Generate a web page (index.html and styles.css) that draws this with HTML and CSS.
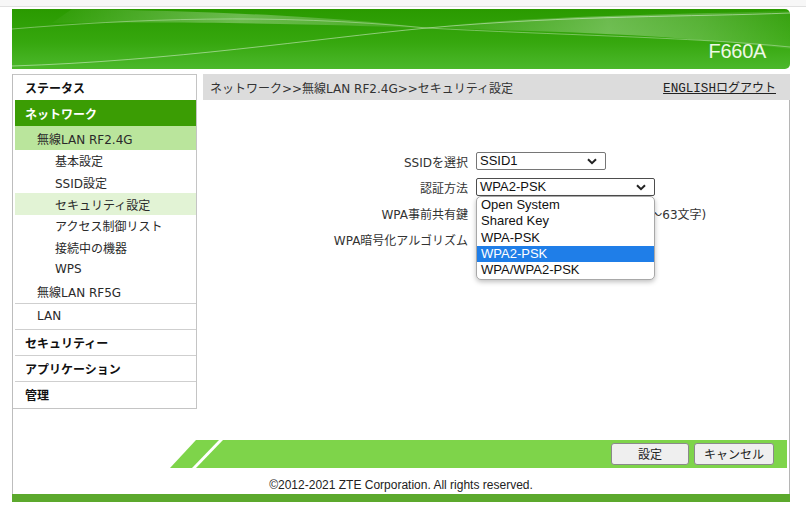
FILE: index.html
```html
<!DOCTYPE html>
<html lang="ja">
<head>
<meta charset="utf-8">
<title>F660A</title>
<link rel="stylesheet" href="styles.css">
</head>
<body>
<div class="topline"></div>
<div class="page">
  <div class="banner">
    <svg class="banner-art" viewBox="0 0 778 60" preserveAspectRatio="none">
      <defs>
        <linearGradient id="bgg" x1="0" y1="0" x2="0" y2="1">
          <stop offset="0" stop-color="#2a9a00"/>
          <stop offset="0.55" stop-color="#36a70e"/>
          <stop offset="1" stop-color="#4cb82c"/>
        </linearGradient>
        <linearGradient id="band" x1="0" y1="0" x2="1" y2="0">
          <stop offset="0" stop-color="#ffffff" stop-opacity="0.02"/>
          <stop offset="0.5" stop-color="#ffffff" stop-opacity="0.3"/>
          <stop offset="0.75" stop-color="#ffffff" stop-opacity="0.2"/>
          <stop offset="1" stop-color="#ffffff" stop-opacity="0.06"/>
        </linearGradient>
      </defs>
      <rect width="778" height="60" fill="url(#bgg)"/>
      <path d="M60 0 C 200 2, 330 8, 415 19 C 330 16, 200 12, 40 14 Z" fill="url(#band)"/>
      <path d="M415 19 C 500 8, 620 6, 778 2 L778 40 C 650 24, 520 22, 415 19 Z" fill="url(#band)"/>
      <path d="M0 20 C 120 10, 260 4, 415 19" stroke="#ffffff" stroke-opacity="0.35" fill="none" stroke-width="1"/>
      <path d="M0 57 C 160 52, 300 30, 415 19 C 560 6, 680 8, 778 4" stroke="#ffffff" stroke-opacity="0.45" fill="none" stroke-width="1"/>
      <path d="M415 19 C 540 26, 680 28, 778 38" stroke="#ffffff" stroke-opacity="0.35" fill="none" stroke-width="1"/>
    </svg>
    <span class="model">F660A</span>
  </div>

  <div class="frame">
    <div class="columns">
      <nav class="nav">
        <div class="nav-item l1 status">ステータス</div>
        <div class="nav-item l1 active">ネットワーク</div>
        <div class="nav-item l2 open">無線LAN RF2.4G</div>
        <div class="nav-item l3">基本設定</div>
        <div class="nav-item l3">SSID設定</div>
        <div class="nav-item l3 current">セキュリティ設定</div>
        <div class="nav-item l3">アクセス制御リスト</div>
        <div class="nav-item l3">接続中の機器</div>
        <div class="nav-item l3">WPS</div>
        <div class="nav-item l2 sep">無線LAN RF5G</div>
        <div class="nav-item l2 sep tall">LAN</div>
        <div class="nav-item l1 sep tall">セキュリティー</div>
        <div class="nav-item l1 sep tall">アプリケーション</div>
        <div class="nav-item l1 last">管理</div>
      </nav>

      <div class="content">
        <div class="crumb">
          <span class="crumb-path">ネットワーク&gt;&gt;無線LAN RF2.4G&gt;&gt;セキュリティ設定</span>
          <span class="crumb-links"><span class="mono">ENGLISH</span>ログアウト</span>
        </div>
        <div class="body">
          <div class="form">
            <div class="label">SSIDを選択</div>
            <div class="field">
              <div class="select w130">SSID1
                <svg class="chev" viewBox="0 0 10 7"><path d="M1 1.2 L5 5.2 L9 1.2" fill="none" stroke="#222" stroke-width="2"/></svg>
              </div>
            </div>

            <div class="label">認証方法</div>
            <div class="field">
              <div class="select w179 focus">WPA2-PSK
                <svg class="chev" viewBox="0 0 10 7"><path d="M1 1.2 L5 5.2 L9 1.2" fill="none" stroke="#222" stroke-width="2"/></svg>
                <div class="dropdown">
                  <div class="opt">Open System</div>
                  <div class="opt">Shared Key</div>
                  <div class="opt">WPA-PSK</div>
                  <div class="opt sel">WPA2-PSK</div>
                  <div class="opt">WPA/WPA2-PSK</div>
                </div>
              </div>
            </div>

            <div class="label">WPA事前共有鍵</div>
            <div class="field">
              <div class="input"></div>
              <span class="hint">(8～63文字)</span>
            </div>

            <div class="label">WPA暗号化アルゴリズム</div>
            <div class="field">
              <div class="select w130">
                <svg class="chev" viewBox="0 0 10 7"><path d="M1 1.2 L5 5.2 L9 1.2" fill="none" stroke="#222" stroke-width="2"/></svg>
              </div>
            </div>
          </div>
        </div>
      </div>
    </div>

    <div class="foot">
      <div class="footbar">
        <svg class="slash" viewBox="0 0 54 28" width="54" height="28">
          <polygon points="26,0 49,0 22,28 0,28" fill="#7ed44a"/>
          <polygon points="53,0 54,0 54,28 26,28" fill="#7ed44a"/>
        </svg>
        <div class="bar">
          <button class="btn w78">設定</button>
          <button class="btn w80">キャンセル</button>
        </div>
      </div>
      <div class="copyright">©2012-2021 ZTE Corporation. All rights reserved.</div>
    </div>
  </div>
  <div class="bottomstrip"></div>
</div>
</body>
</html>
```

FILE: styles.css
```css
* { box-sizing: border-box; }

html, body {
  margin: 0;
  padding: 0;
  background: #ffffff;
}

body {
  font-family: "DejaVu Sans", "Noto Sans CJK JP", sans-serif;
  font-size: 12px;
  color: #222;
}

.topline {
  height: 7px;
  background: #f7f7f7;
  border-bottom: 1px solid #e0e0e0;
}

.page {
  margin-left: 12px;
  width: 778px;
}

.banner {
  position: relative;
  margin-top: 2px;
  height: 60px;
  border-radius: 0 5px 5px 0;
  overflow: hidden;
  display: flex;
  justify-content: flex-end;
  align-items: flex-end;
  padding: 0 24px 8px 0;
}

.banner-art {
  position: absolute;
  left: 0;
  top: 0;
  width: 100%;
  height: 100%;
  display: block;
}

.model {
  position: relative;
  font-family: "Liberation Sans", Arial, sans-serif;
  font-size: 20px;
  line-height: 20px;
  color: #eef8e6;
  letter-spacing: -0.3px;
}

.frame {
  margin-top: 5px;
  border-left: 1px solid #bdbdbd;
}

.columns {
  display: flex;
  gap: 6px;
  height: 366px;
}

/* navigation */
.nav {
  width: 184px;
  align-self: flex-start;
  border-top: 1px solid #c4c4c4;
  border-right: 1px solid #c4c4c4;
  border-bottom: 1px solid #c4c4c4;
  padding-left: 2px;
}

.nav-item {
  display: flex;
  align-items: center;
  white-space: nowrap;
}

.l1 {
  height: 26px;
  padding-left: 10px;
  font-weight: bold;
  color: #111;
}

.l1.status { height: 25px; }

.l1.active {
  background: #3b9d04;
  color: #ffffff;
}

.l2 {
  height: 24px;
  padding-left: 22px;
  color: #2a2a2a;
}

.l2.open { background: #bae59c; }

.l3 {
  height: 21.67px;
  padding-left: 40px;
  color: #2a2a2a;
}

.l3.current { background: #e2f3d5; }

.sep { border-bottom: 1px solid #cfcfcf; }

.tall { height: 26px; }

.l1.last { height: 26px; }

/* content */
.content {
  width: 587px;
  display: flex;
  flex-direction: column;
}

.crumb {
  height: 26px;
  background: #dcdcdc;
  display: flex;
  align-items: center;
  justify-content: space-between;
  padding: 0 14px 0 7px;
  color: #333;
}

.crumb-links {
  text-decoration: underline;
  color: #222;
  font-family: "Noto Sans CJK JP", sans-serif;
}

.mono {
  font-family: "Liberation Mono", monospace;
  font-size: 12.6px;
}

.body {
  flex: 1;
  border-right: 1px solid #b5b5b5;
  padding-top: 48px;
}

.form {
  display: grid;
  grid-template-columns: 265px 1fr;
  column-gap: 8px;
  grid-auto-rows: 26px;
}

.label {
  display: flex;
  align-items: center;
  justify-content: flex-end;
  color: #333;
  white-space: nowrap;
}

.field {
  display: flex;
  align-items: center;
}

.select {
  position: relative;
  height: 18px;
  border: 1px solid #767676;
  border-radius: 2px;
  background: #ffffff;
  font-family: "Liberation Sans", Arial, sans-serif;
  font-size: 13px;
  line-height: 16px;
  padding-left: 3px;
  color: #111;
}

.select.focus { border-color: #4d4d4d; }

.w130 { width: 130px; }
.w179 { width: 179px; }

.chev {
  position: absolute;
  right: 8px;
  top: 5px;
  width: 10px;
  height: 7px;
}

.dropdown {
  position: absolute;
  left: -1px;
  top: 17px;
  width: 179px;
  background: #ffffff;
  border: 1px solid #a8a8a8;
  border-radius: 5px;
  box-shadow: 0 2px 5px rgba(0, 0, 0, 0.25);
  overflow: hidden;
  z-index: 5;
}

.opt {
  height: 16.33px;
  line-height: 16px;
  padding-left: 4px;
  font-size: 13px;
  color: #111;
}

.opt.sel {
  background: #1f7ee8;
  color: #ffffff;
}

.input {
  width: 156px;
  height: 20px;
  border: 1px solid #767676;
  border-radius: 2px;
}

.hint {
  margin-left: 6px;
  color: #333;
  white-space: nowrap;
}

/* footer */
.foot {
  border-right: 1px solid #b5b5b5;
}

.footbar {
  display: flex;
  height: 28px;
  margin-left: 157px;
  margin-right: 2px;
}

.slash {
  display: block;
  flex: none;
}

.bar {
  flex: 1;
  background: #7ed44a;
  display: flex;
  align-items: center;
  justify-content: flex-end;
  gap: 5px;
  padding-right: 13px;
}

.btn {
  height: 22px;
  border: 1px solid #8a8a8a;
  border-radius: 3px;
  background: #efefef;
  font-family: "Noto Sans CJK JP", sans-serif;
  font-size: 12px;
  color: #222;
  padding: 0;
  line-height: 20px;
}

.w78 { width: 78px; }
.w80 { width: 80px; }

.copyright {
  height: 26px;
  padding-top: 9px;
  text-align: center;
  font-family: "Liberation Sans", Arial, sans-serif;
  font-size: 12px;
  line-height: 16px;
  color: #222;
}

.bottomstrip {
  height: 8px;
  background: #5ca92d;
}
```
